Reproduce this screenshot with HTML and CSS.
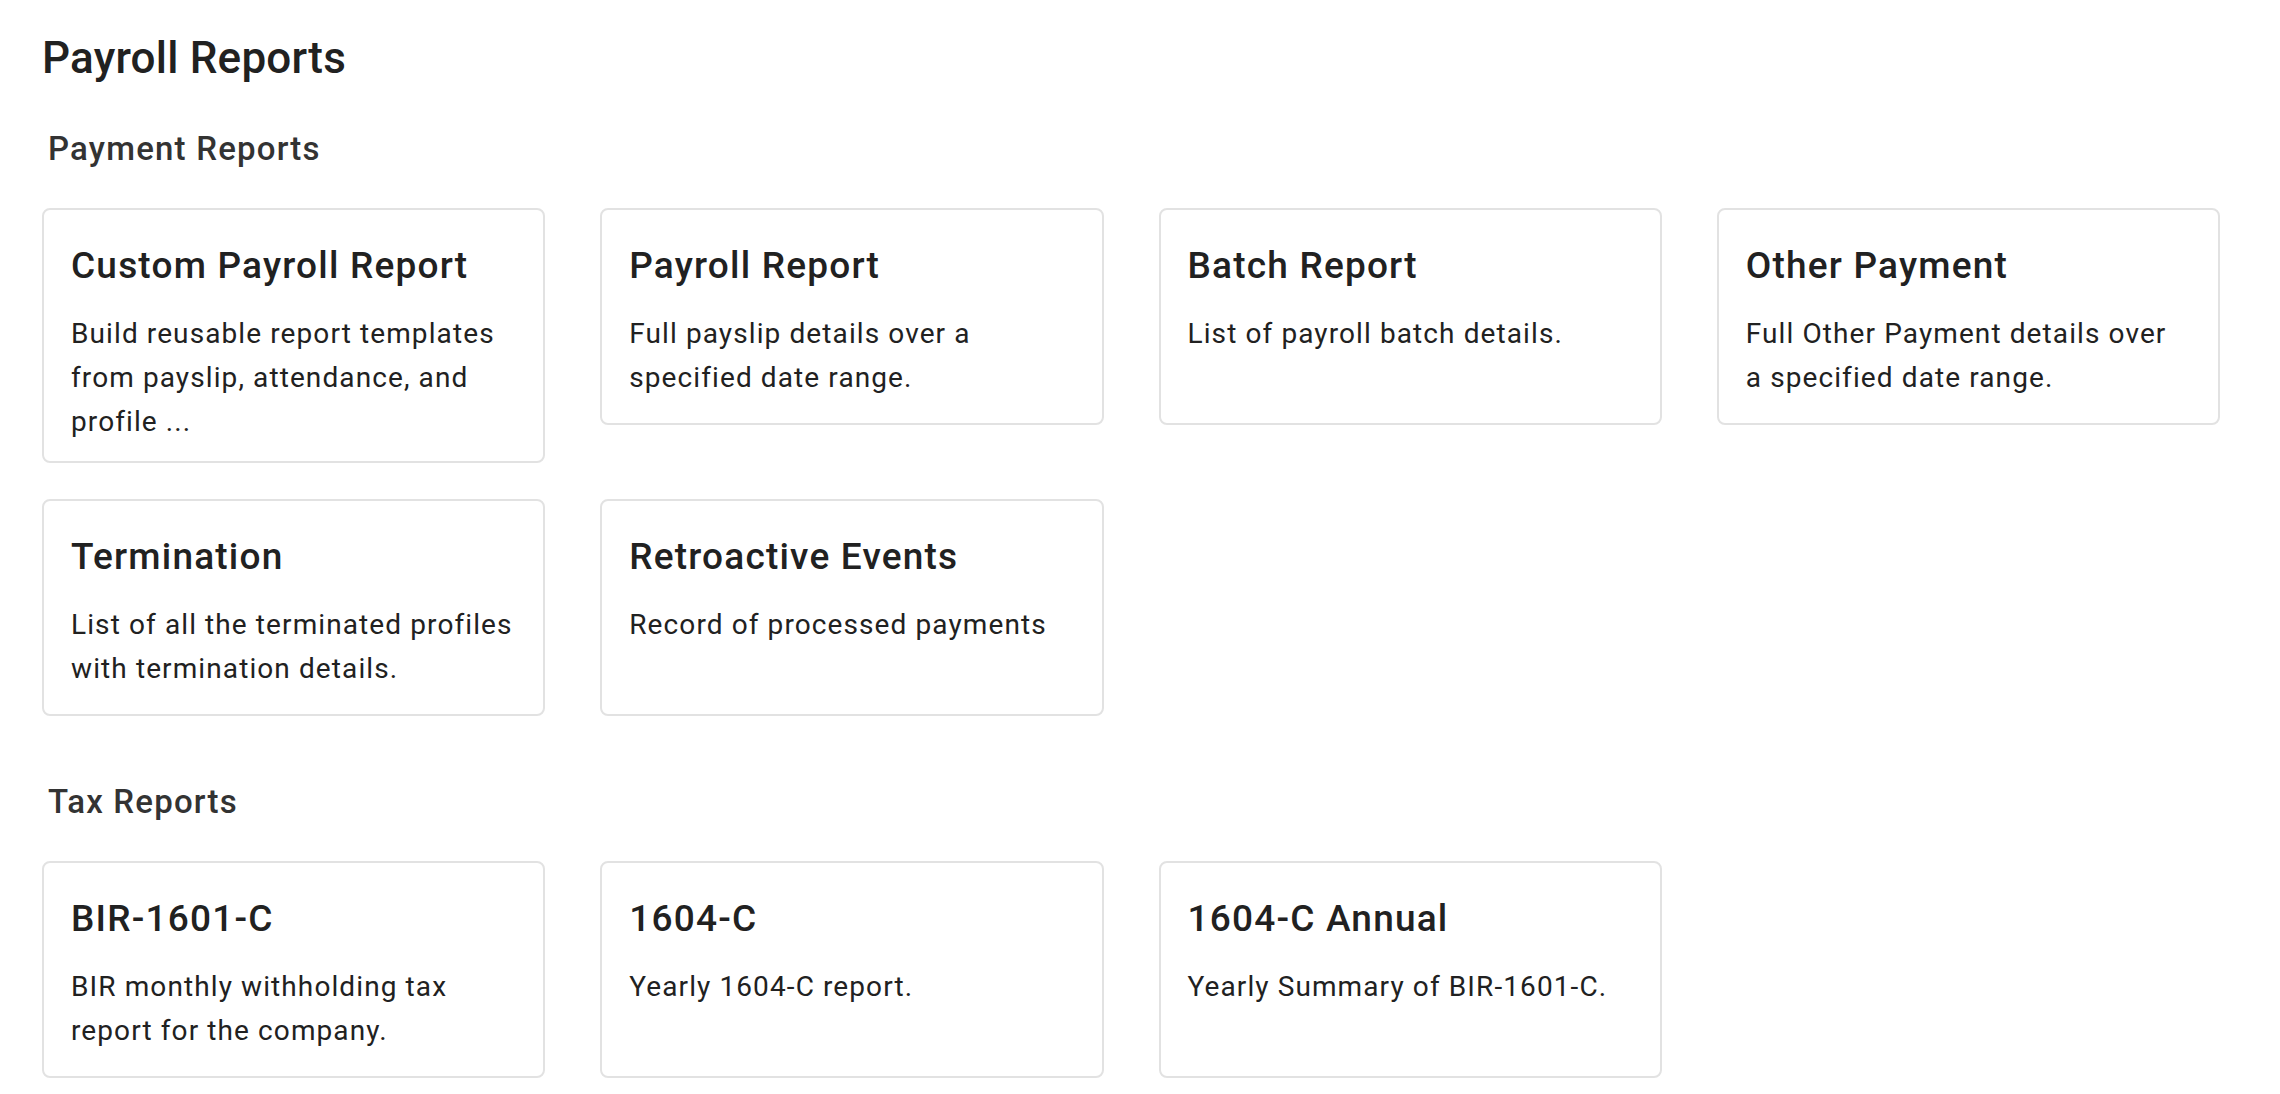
FILE: index.html
```html
<!DOCTYPE html>
<html lang="en">
<head>
    <meta charset="UTF-8">
    <meta name="viewport" content="width=device-width, initial-scale=1.0">
    <title>Payroll Reports</title>
    <link rel="stylesheet" href="styles.css">
</head>
<body>
    <div class="page">
        <h1 class="page-title">Payroll Reports</h1>

        <section class="report-section">
            <h2 class="section-title">Payment Reports</h2>
            <div class="report-grid">
                <a class="report-card" href="#">
                    <h3>Custom Payroll Report</h3>
                    <p>Build reusable report templates from payslip, attendance, and profile ...</p>
                </a>
                <a class="report-card" href="#">
                    <h3>Payroll Report</h3>
                    <p>Full payslip details over a specified date range.</p>
                </a>
                <a class="report-card" href="#">
                    <h3>Batch Report</h3>
                    <p>List of payroll batch details.</p>
                </a>
                <a class="report-card" href="#">
                    <h3>Other Payment</h3>
                    <p>Full Other Payment details over a&nbsp;specified date range.</p>
                </a>
                <a class="report-card" href="#">
                    <h3>Termination</h3>
                    <p>List of all the terminated profiles with termination details.</p>
                </a>
                <a class="report-card" href="#">
                    <h3>Retroactive Events</h3>
                    <p>Record of processed payments</p>
                </a>
            </div>
        </section>

        <section class="report-section">
            <h2 class="section-title">Tax Reports</h2>
            <div class="report-grid">
                <a class="report-card" href="#">
                    <h3>BIR-1601-C</h3>
                    <p>BIR monthly withholding tax report for the company.</p>
                </a>
                <a class="report-card" href="#">
                    <h3>1604-C</h3>
                    <p>Yearly 1604-C report.</p>
                </a>
                <a class="report-card" href="#">
                    <h3>1604-C Annual</h3>
                    <p>Yearly Summary of BIR-1601-C.</p>
                </a>
            </div>
        </section>
    </div>
</body>
</html>
```

FILE: styles.css
```css
body {
    margin: 0;
    font-family: Roboto, "Liberation Sans", Arial, sans-serif;
    color: #212121;
    background-color: #fff;
}
.page {
    padding: 33px 60px 40px 42px;
}
.page-title {
    margin: 0;
    font-size: 44px;
    font-weight: 500;
    line-height: 50px;
    letter-spacing: 0.2px;
}
.report-section {
    margin-top: 47px;
}
.report-section + .report-section {
    margin-top: 67px;
}
.section-title {
    margin: 0 0 41px 6px;
    font-size: 33px;
    font-weight: 500;
    line-height: 37px;
    letter-spacing: 1.2px;
    color: #333;
}
.report-grid {
    display: grid;
    grid-template-columns: repeat(4, 1fr);
    column-gap: 55px;
    row-gap: 36px;
    align-items: start;
}
.report-card {
    display: block;
    box-sizing: border-box;
    min-height: 217px;
    padding: 35px 26px 17px 27px;
    border: 2px solid #e2e2e2;
    border-radius: 8px;
    color: inherit;
    text-decoration: none;
}
.report-card h3 {
    margin: 0;
    font-size: 37px;
    font-weight: 500;
    line-height: 42px;
    letter-spacing: 1.2px;
}
.report-card p {
    margin: 25px 0 0;
    font-size: 28px;
    line-height: 44px;
    letter-spacing: 1.1px;
}
```
